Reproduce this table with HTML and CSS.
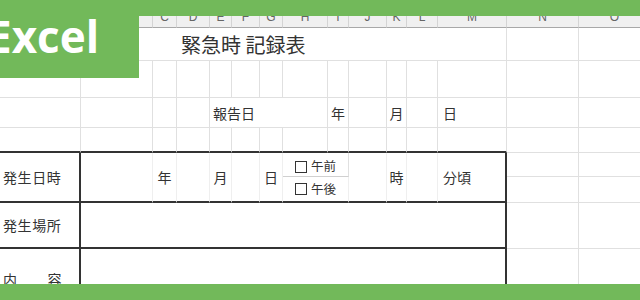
FILE: index.html
```html
<!DOCTYPE html>
<html lang="ja">
<head>
<meta charset="utf-8">
<title>緊急時 記録表</title>
<link rel="stylesheet" href="styles.css">
</head>
<body>
<div class="sheet">
  <!-- header row -->
  <div class="h">A</div><div class="h">B</div><div class="h">C</div><div class="h">D</div><div class="h">E</div>
  <div class="h">F</div><div class="h">G</div><div class="h">H</div><div class="h">I</div><div class="h">J</div>
  <div class="h">K</div><div class="h">L</div><div class="h">M</div><div class="h">N</div><div class="h">O</div>

  <!-- title row -->
  <div class="c title span-a-m">緊急時 記録表</div><div class="c"></div><div class="c"></div>

  <!-- blank row -->
  <div class="c"></div><div class="c"></div><div class="c"></div><div class="c"></div><div class="c"></div>
  <div class="c"></div><div class="c"></div><div class="c"></div><div class="c"></div><div class="c"></div>
  <div class="c"></div><div class="c"></div><div class="c"></div><div class="c"></div><div class="c"></div>

  <!-- report date row -->
  <div class="c"></div><div class="c"></div><div class="c"></div><div class="c"></div>
  <div class="c span-e-h pl3">報告日</div>
  <div class="c center">年</div><div class="c"></div><div class="c center">月</div><div class="c"></div>
  <div class="c pl5">日</div><div class="c"></div><div class="c"></div>

  <!-- blank row above table -->
  <div class="c bb"></div><div class="c bb"></div><div class="c bb"></div><div class="c bb"></div><div class="c bb"></div>
  <div class="c bb"></div><div class="c bb"></div><div class="c bb"></div><div class="c bb"></div><div class="c bb"></div>
  <div class="c bb"></div><div class="c bb"></div><div class="c bb"></div><div class="c"></div><div class="c"></div>

  <!-- 発生日時 (two sheet rows) -->
  <div class="c r2 bb br label pl3">発生日時</div>
  <div class="c r2 bb in"></div>
  <div class="c r2 bb in center">年</div>
  <div class="c r2 bb in"></div>
  <div class="c r2 bb in center">月</div>
  <div class="c r2 bb in"></div>
  <div class="c r2 bb in center">日</div>
  <div class="c span-h-i ampm top"><span class="box"></span>午前</div>
  <div class="c r2 bb in"></div>
  <div class="c r2 bb in center">時</div>
  <div class="c r2 bb in"></div>
  <div class="c r2 bb br pl5">分頃</div>
  <div class="c"></div><div class="c"></div>
  <div class="c span-h-i ampm bb in"><span class="box"></span>午後</div>
  <div class="c"></div><div class="c"></div>

  <!-- 発生場所 -->
  <div class="c bb br label pl3">発生場所</div>
  <div class="c span-b-m bb br"></div>
  <div class="c"></div><div class="c"></div>

  <!-- 内容 -->
  <div class="c br label pl3"><span class="spread"><span>内</span><span>容</span></span></div>
  <div class="c span-b-m br"></div>
  <div class="c"></div><div class="c"></div>
</div>

<div class="topbar"></div>
<div class="badge"><span class="badge-text">Excel</span></div>
<div class="bottombar"></div>
</body>
</html>
```

FILE: styles.css
```css
html, body {
  margin: 0;
  padding: 0;
}

body {
  position: relative;
  width: 640px;
  height: 300px;
  overflow: hidden;
  background: #ffffff;
  color: #333333;
  font-family: "Noto Sans CJK JP", "Noto Sans", sans-serif;
}

.sheet {
  display: grid;
  grid-template-columns: 81px 72px 24px 33px 22px 28px 23px 45px 21px 38px 20px 31px 69px 72px 72px;
  grid-template-rows: 28px 33px 37px 30px 25px 24px 26px 46px 60px;
  width: 651px;
}

.h {
  box-sizing: border-box;
  background: #f0f0f0;
  border-right: 1px solid #d4d4d4;
  border-bottom: 1px solid #a8a8a8;
  display: flex;
  align-items: flex-end;
  justify-content: center;
  padding-bottom: 4px;
  font-family: "Liberation Sans", Arial, sans-serif;
  font-size: 12px;
  line-height: 12px;
  color: #666666;
}

.c {
  box-sizing: border-box;
  border-right: 1px solid #e0e0e0;
  border-bottom: 1px solid #e0e0e0;
  display: flex;
  align-items: center;
  font-size: 14px;
  line-height: 1;
  white-space: nowrap;
}

.title {
  font-size: 20px;
  padding-left: 181px;
  padding-top: 2px;
}

.span-a-m { grid-column: 1 / 14; }
.span-e-h { grid-column: 5 / 9; }
.span-h-i { grid-column: 8 / 10; }
.span-b-m { grid-column: 2 / 14; }
.r2 { grid-row: span 2; }

.center { justify-content: center; }
.pl3 { padding-left: 3px; }
.pl5 { padding-left: 5px; }

.in { border-right-color: #efefef; }

.bb { border-bottom: 2px solid #333333; }
.br { border-right: 2px solid #333333; }

.label { letter-spacing: 0.6px; }

.ampm {
  justify-content: center;
  font-size: 12.5px;
  gap: 4px;
}

.ampm.top {
  border-bottom-color: #d0d0d0;
  padding-top: 4px;
}

.box {
  display: inline-block;
  width: 12px;
  height: 12px;
  box-sizing: border-box;
  border: 1px solid #333333;
}

.spread {
  display: flex;
  justify-content: space-between;
  width: 59px;
}

.topbar {
  position: absolute;
  top: 0;
  left: 0;
  width: 640px;
  height: 16px;
  background: #72b95a;
}

.badge {
  position: absolute;
  top: 0;
  left: 0;
  width: 139px;
  height: 78px;
  background: #72b95a;
  overflow: hidden;
}

.badge-text {
  position: absolute;
  left: -13px;
  top: 14px;
  font-family: "Open Sans", "Noto Sans", sans-serif;
  font-weight: 700;
  font-size: 44px;
  line-height: 44px;
  color: #ffffff;
}

.bottombar {
  position: absolute;
  top: 284px;
  left: 0;
  width: 640px;
  height: 16px;
  background: #72b95a;
}
```
